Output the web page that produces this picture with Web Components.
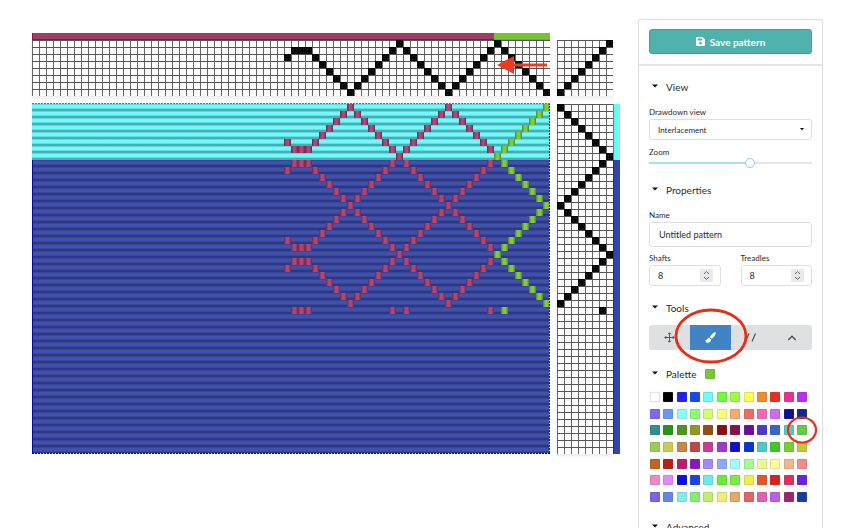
<!DOCTYPE html>
<html lang="en">
<head>
<meta charset="utf-8">
<title>Untitled pattern</title>
<style>
  html, body { margin: 0; height: 100%; background: #fff; overflow: hidden; }
  body { font-family: Lato, "Liberation Sans", sans-serif; color: #2b2b2b; }
</style>
</head>
<body>
<pattern-editor>
  <weave-draft slot="draft"></weave-draft>
  <tool-panel slot="panel">
    <save-button slot="header">Save pattern</save-button>
    <panel-section heading="View">
      <select-field label="Drawdown view" value="Interlacement"></select-field>
      <range-field label="Zoom" value="63"></range-field>
    </panel-section>
    <panel-section heading="Properties">
      <text-field label="Name" value="Untitled pattern"></text-field>
      <field-row>
        <number-field label="Shafts" value="8"></number-field>
        <number-field label="Treadles" value="8"></number-field>
      </field-row>
    </panel-section>
    <panel-section heading="Tools" class="tools">
      <tool-bar></tool-bar>
    </panel-section>
    <panel-section heading="Palette" swatch="#78c83c" class="palette">
      <color-palette></color-palette>
    </panel-section>
    <panel-section heading="Advanced"></panel-section>
  </tool-panel>
</pattern-editor>

<script>
function define(name, render) {
  customElements.define(name, class extends HTMLElement {
    connectedCallback() {
      if (this.shadowRoot) return;
      const root = this.attachShadow({ mode: "open" });
      root.innerHTML = render(this);
    }
  });
}

const FIELD = `
  :host { display: block; min-width: 0; }
  *, *::before, *::after { box-sizing: border-box; }
  label { display: block; font-size: 8px; line-height: 12px; color: #2b2b2b; }
  input, select { font: inherit; color: #2b2b2b; background: #fff; display: block; width: 100%; margin: 0;
    border: 1px solid #dededf; border-radius: 3px; outline: none; appearance: none; }
`;

define("pattern-editor", () => `
  <style>
    :host { display: flex; align-items: flex-start; gap: 18px; box-sizing: border-box; height: 100vh;
      padding: 0 27px 0 32px; overflow: hidden; }
    main { flex: 1; min-width: 0; padding-top: 33px; }
    aside { flex: 0 0 185px; padding-top: 19px; }
  </style>
  <main><slot name="draft"></slot></main>
  <aside><slot name="panel"></slot></aside>
`);

/* Draft data: columns are counted from the right edge, rows from the top. */
const CELL = 7, SHAFTS = 8;
const threading = [7,6,5,4,3,2,1,0,1,2,3,4,5,6,7,6,5,4,3,2,1,0,1,2,3,4,5,6,7,6,5,4,3,2,1,1,1,2];
const treadling = [0,1,2,3,4,5,6,7,6,5,4,3,2,1,0,1,2,3,4,5,6,7,6,5,4,3,2,1,0,6];
const GREEN_ENDS = 8, CYAN_PICKS = 8, PICKS = 50;

const dot = (c, r) =>
  `<rect x="${c * CELL}" y="${r * CELL}" width="7" height="7" fill="#000"/>` +
  `<rect x="${c * CELL + 2}" y="${r * CELL + 2}" width="4" height="4" fill="none" stroke="#333" stroke-width=".5"/>`;
const svg = (cols, rows, body) =>
  `<svg width="${cols * CELL}" height="${rows * CELL}" viewBox="0 0 ${cols * CELL} ${rows * CELL}" aria-hidden="true">${body}</svg>`;

define("weave-draft", () => {
  const n = threading.length;
  const thread = threading.map((s, i) => dot(n - 1 - i, s)).join("");
  const tie = Array.from({ length: SHAFTS }, (_, i) => dot(i, SHAFTS - 1 - i)).join("");
  const tread = treadling.map((t, r) => dot(t, r)).join("");
  let cloth = "";
  treadling.forEach((t, r) => threading.forEach((s, i) => {
    if (s !== SHAFTS - 1 - t) return;
    const green = i < GREEN_ENDS, x = (n - 1 - i) * CELL, y = r * CELL;
    cloth += `<rect x="${x}" y="${y}" width="7" height="7" fill="${green ? "#5a981d" : "#7b2d55"}"/>` +
      `<rect x="${x + 1}" y="${y}" width="5" height="7" fill="${green ? "#6fb42e" : "#963b67"}"/>` +
      `<rect x="${x + 2}" y="${y}" width="3" height="7" fill="${green ? "#80ca42" : "#ab4974"}"/>`;
  }));
  return `
  <style>
    :host { display: grid; grid-template-columns: minmax(0, 1fr) 56px 7px; column-gap: 0; }
    svg { display: block; flex: none; }
    .warp { height: 7px; margin-right: 7px; display: flex; }
    .warp i { flex: 1; background: #a03c6a; box-shadow: inset 1px -1px #8c1550; }
    .warp i + i { flex: 0 0 56px; background: #76c536; box-shadow: inset 0 -1px #68b32b; }
    .pane { position: relative; display: flex; justify-content: flex-end; }
    .lines { background-color: #fff; background-image:
        linear-gradient(#555 1px, transparent 1px),
        linear-gradient(90deg, #666 1px, transparent 1px);
      background-size: 7px 7px; background-position: right top; box-shadow: 0 2px 4px rgba(0,0,0,.09); }
    .threading, .drawdown { margin-right: 7px; }
    .threading, .tieup { height: 56px; margin-bottom: 8px; }
    .drawdown { height: ${PICKS * CELL}px; background:
        linear-gradient(rgba(0,0,60,.14) 1px, transparent 1px 4px, rgba(0,10,30,.12) 4px 5px, rgba(0,10,30,.33) 5px 7px) 0 0 / 7px 7px,
        linear-gradient(#71fafa ${CYAN_PICKS * CELL}px, #4150ac 0); }
    .drawdown::after { content: ""; position: absolute; inset: -1px 0 0; background:
        repeating-linear-gradient(90deg, #777 0 2px, #ddd 2px 3px) top / 100% 1px no-repeat,
        repeating-linear-gradient(90deg, #06067c 0 2px, #ccd 2px 3px) bottom / 100% 1px no-repeat,
        repeating-linear-gradient(#15158c 0 2px, #ccd 2px 3px) right / 1px 100% no-repeat,
        linear-gradient(transparent 57px, #060699 0) left / 1px 100% no-repeat; }
    .weft { background: linear-gradient(#6ef7f7 ${CYAN_PICKS * CELL}px, #3247ab 0); box-shadow: inset 1px 0 rgba(0,20,160,.45); }
    .arrow { position: absolute; right: 3px; top: 15px; }
  </style>
  <div class="warp"><i></i><i></i></div><span></span><span></span>
  <div class="pane lines threading">${svg(n, SHAFTS, thread)}
    <svg class="arrow" width="50" height="20" viewBox="0 0 50 20" aria-hidden="true">
      <path d="M16 10H50" stroke="#ed3a24" stroke-width="3"/><path d="M0 10L17 1V19Z" fill="#ed3a24"/>
    </svg>
  </div>
  <div class="pane lines tieup">${svg(SHAFTS, SHAFTS, tie)}</div><span></span>
  <div class="pane drawdown">${svg(n, treadling.length, cloth)}</div>
  <div class="pane lines">${svg(SHAFTS, treadling.length, tread)}</div>
  <div class="weft"></div>`;
});

define("tool-panel", () => `
  <style>
    :host { display: block; box-sizing: border-box; border: 1px solid #dfdfe0; border-radius: 3px;
      background: #fff; box-shadow: 0 0 1px rgba(0,0,0,.15); }
    header { padding: 9px 10px 10px; border-bottom: 2px solid #e6e6e7; }
    .body { padding: 0 10px 12px; }
  </style>
  <header><slot name="header"></slot></header>
  <div class="body"><slot></slot></div>
`);

define("save-button", () => `
  <style>
    :host { display: block; }
    button { display: flex; width: 100%; height: 25px; align-items: center; justify-content: center; gap: 5px; padding: 0;
      font: 700 10px/14px Lato, "Liberation Sans", sans-serif; color: #fff; background: #50b2ac;
      border: 1px solid #2aa79e; border-radius: 3px; }
  </style>
  <button type="button">
    <svg width="9" height="9" viewBox="0 0 18 18" aria-hidden="true">
      <path fill="#fff" fill-rule="evenodd" d="M2 0H13L18 5V16A2 2 0 0 1 16 18H2A2 2 0 0 1 0 16V2A2 2 0 0 1 2 0ZM3 3V7H12V3ZM9 9.500A2.700 2.700 0 1 0 9 15A2.700 2.700 0 1 0 9 9.500Z"/>
    </svg>
    <span><slot></slot></span>
  </button>
`);

define("panel-section", el => `
  <style>
    :host { display: block; padding-top: 12px; }
    :host(:nth-child(2)) { padding-top: 11px; }
    summary { display: flex; align-items: center; height: 20px; padding-left: 3px; font-size: 10px; line-height: 14px;
      color: #2b2b2b; list-style: none; }
    summary svg { margin: -3px 8px 0 0; }
    summary b { width: 10px; height: 10px; margin-left: 8px; border: 1px solid #6bb52f; box-sizing: border-box; border-radius: 1px; }
    .content { padding-top: 9px; display: flex; flex-direction: column; gap: 6px; }
    :host(.tools) .content { padding: 7px 0 2px; }
    :host(.palette) .content { padding: 8px 0 3px; }
  </style>
  <details open>
    <summary><svg width="6" height="4" viewBox="0 0 12 8" aria-hidden="true"><path d="M0 1H12L6 7Z" fill="#111"/></svg>${el.getAttribute("heading")}${
      el.hasAttribute("swatch") ? `<b style="background:${el.getAttribute("swatch")}"></b>` : ""}</summary>
    <div class="content"><slot></slot></div>
  </details>
`);

define("select-field", el => `
  <style>${FIELD}
    .box { position: relative; margin-top: 1px; }
    select { height: 21px; padding: 0 8px; font-size: 8px; }
    svg { position: absolute; right: 8px; top: 9px; pointer-events: none; }
  </style>
  <label for="f">${el.getAttribute("label")}</label>
  <div class="box">
    <select id="f"><option>${el.getAttribute("value")}</option></select>
    <svg width="4" height="3" viewBox="0 0 8 6" aria-hidden="true"><path d="M0 0H8L4 5Z" fill="#111"/></svg>
  </div>
`);

define("range-field", el => `
  <style>${FIELD}
    input { height: 10px; border: 0; background: linear-gradient(90deg, #a9dcf5 ${el.getAttribute("value")}%, #e5e5e5 0) center / 100% 2px no-repeat; }
    input::-webkit-slider-thumb { appearance: none; width: 10px; height: 10px; border: 1px solid #86cdf1; border-radius: 50%; background: #fff; }
  </style>
  <label for="f">${el.getAttribute("label")}</label>
  <input id="f" type="range" min="0" max="100" value="${el.getAttribute("value")}">
`);

define("text-field", el => `
  <style>${FIELD}
    input { height: 25px; margin-top: 1px; padding: 0 9px; font-size: 9px; }
  </style>
  <label for="f">${el.getAttribute("label")}</label>
  <input id="f" type="text" value="${el.getAttribute("value")}">
`);

define("field-row", () => `
  <style>
    :host { display: grid; grid-template-columns: 1fr 1fr; gap: 20px; margin-top: -1px; }
  </style>
  <slot></slot>
`);

define("number-field", el => `
  <style>${FIELD}
    .box { display: flex; align-items: center; justify-content: space-between; height: 21px; margin-top: 1px; padding: 0 7px 0 8px;
      border: 1px solid #dededf; border-radius: 3px; }
    input { width: auto; min-width: 0; flex: 1; height: 19px; padding: 0; border: 0; font-size: 9px; background: none; appearance: textfield; }
    input::-webkit-inner-spin-button { display: none; }
    svg { flex: none; background: #e9e9ed; }
  </style>
  <label for="f">${el.getAttribute("label")}</label>
  <div class="box">
    <input id="f" type="number" min="1" value="${el.getAttribute("value")}">
    <svg width="13" height="13" viewBox="0 0 13 13" aria-hidden="true">
      <path d="M4 5L6.500 2.500L9 5M4 8L6.500 10.500L9 8" fill="none" stroke="#666" stroke-width="1"/>
    </svg>
  </div>
`);

define("tool-bar", () => `
  <style>
    :host { display: grid; grid-template-columns: repeat(4, 1fr); height: 25px; border-radius: 3px; background: #dfe0e1; }
    button { position: relative; display: grid; place-items: center; padding: 0; border: 0; background: none; color: #555; }
    .on { background: #4183c4; color: #fff; z-index: 1; }
    .ring { position: absolute; left: -16px; top: -18px; }
  </style>
  <button type="button" aria-label="Pan">
    <svg width="11" height="11" viewBox="0 0 22 22" fill="none" stroke="currentColor" stroke-width="2" aria-hidden="true">
      <path d="M11 2V20M2 11H20M8 4.500L11 1.500L14 4.500M8 17.500L11 20.500L14 17.500M4.500 8L1.500 11L4.500 14M17.500 8L20.500 11L17.500 14"/></svg>
  </button>
  <button type="button" class="on" aria-label="Paint" aria-pressed="true">
    <svg width="11" height="11" viewBox="0 0 22 22" fill="currentColor" aria-hidden="true">
      <path d="M19.500 .5C21 .3 22 1.500 21.500 3C20 7 16.500 11.500 13.500 13.500L9.500 10C11.500 7 16 2 19.500 .5ZM8.500 11.500L12.300 15C12.500 19 9 21.500 5.500 21.500C2.500 21.500 .8 19 .5 15.800C2 17 3.200 16.500 4 14.500C4.800 12.500 6.500 11.300 8.500 11.500Z"/></svg>
    <svg class="ring" width="74" height="60" viewBox="0 0 74 60" fill="none" stroke="#e52e18" stroke-width="2.800" aria-hidden="true">
      <ellipse cx="37" cy="29" rx="35" ry="26"/></svg>
  </button>
  <button type="button" aria-label="Straight">
    <svg width="12" height="11" viewBox="0 0 24 22" fill="none" stroke="currentColor" stroke-width="2.500" aria-hidden="true">
      <path d="M1 19L8 3M14 19L21 3"/></svg>
  </button>
  <button type="button" aria-label="Point">
    <svg width="10" height="10" viewBox="0 0 20 20" fill="none" stroke="currentColor" stroke-width="3" aria-hidden="true">
      <path d="M2.500 14L10 6.500L17.500 14"/></svg>
  </button>
`);

const COLORS = `
  ffffff 000000 2020f0 1448f0 6cfcfc 6cfc38 9cfc44 fcfc50 f08c30 e83020 ec3090 b830f8
  8068f4 6898f8 8cfcfc 8cfc74 d4fc70 fcfc78 f4ac70 ee6c64 f068b8 d068f8 10108c 102c8c
  309090 289414 509420 949428 905014 881010 881050 681098 5038c8 3864cc 58c8c8 64cc48
  9ccc54 cccc54 c48848 c04844 c43c94 983cc8 1010c4 0c34cc 50c8c8 40c828 78cc30 c8c830
  c06420 bc1c14 bc1c6c 8818c0 a488fc 8ca8fc a4fcfc a4fc94 ecfc94 fcfc98 f4b48c f48c88
  f088c8 e08cfc 0c0ce8 1c44e4 68ecec 68ec38 78ec40 f0ec50 e05828 dc201c dc3060 6c20e4
  7864e4 6484e8 84ecec 84ec70 c4ec70 f0ec74 e8a868 e06460 e060b4 b860e8 9c2868 1c3ca4
`.trim().split(/\s+/);

define("color-palette", () => `
  <style>
    :host { display: grid; grid-template-columns: repeat(12, 10px); grid-auto-rows: 10px; height: 110px;
      justify-content: space-between; align-content: space-between; padding: 0 5px 0 1px; }
    button { position: relative; padding: 0; border: 1px solid rgba(90,90,90,.16); border-radius: 1px; box-shadow: 0 0 1px rgba(0,0,0,.2); }
    button:first-child { border-color: #f8f8f8; box-shadow: none; }
    svg { position: absolute; left: -12px; top: -10px; z-index: 1; }
  </style>
  ${COLORS.map((c, i) => `<button type="button" aria-label="#${c}" style="background-color:#${c}">${i === 35 ?
    `<svg width="32" height="28" viewBox="0 0 32 28" fill="none" stroke="#e8301a" stroke-width="2.200" aria-hidden="true"><ellipse cx="16" cy="14" rx="14" ry="12.500"/></svg>` : ""}</button>`).join("")}
`);
</script>
</body>
</html>
